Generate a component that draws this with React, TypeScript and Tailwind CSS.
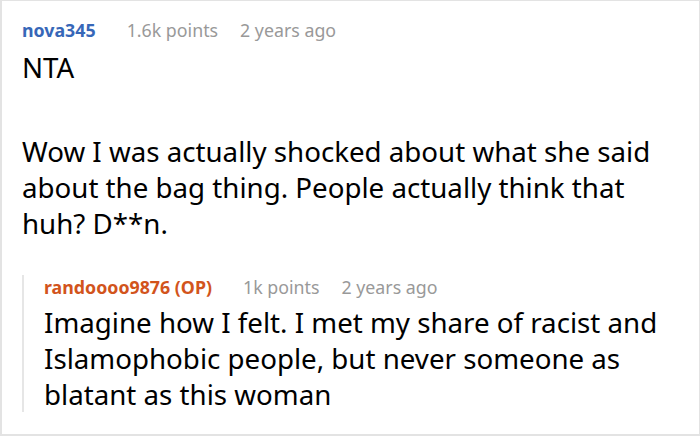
function Meta({ name, points, time, color }: { name: string; points: string; time: string; color: string }) {
  return (
    <div className="flex items-baseline text-[17.8px] leading-[24px]">
      <span className={`font-bold ${color}`}>{name}</span>
      <span className="ml-[31px] text-[#999999]">{points}</span>
      <span className="ml-[22px] text-[#999999]">{time}</span>
    </div>
  );
}

export default function App() {
  return (
    <div
      className="w-[700px] h-[436px] bg-white border border-[#e3e3e3] border-l-2 border-b-2 overflow-hidden text-black"
      style={{ fontFamily: '"Noto Sans", sans-serif' }}
    >
      <div className="pl-[20px] pr-4 pt-[17px]">
        <Meta name="nova345" points="1.6k points" time="2 years ago" color="text-[#3767b8]" />
        <div className="mt-[7px] text-[27.7px] leading-[36px]">
          <p>NTA</p>
          <p className="mt-[48px]">
            Wow I was actually shocked about what she said about the bag thing. People actually think that huh? D**n.
          </p>
        </div>
        <div className="mt-[44px] border-l-2 border-[#e6e6e6] pl-[20px]">
          <div className="-mt-[10px]">
            <Meta name="randoooo9876 (OP)" points="1k points" time="2 years ago" color="text-[#d2541c]" />
          </div>
          <p className="mt-[5px] text-[27.7px] leading-[36px]">
            Imagine how I felt. I met my share of racist and Islamophobic people, but never someone as blatant as this woman
          </p>
        </div>
      </div>
    </div>
  );
}
